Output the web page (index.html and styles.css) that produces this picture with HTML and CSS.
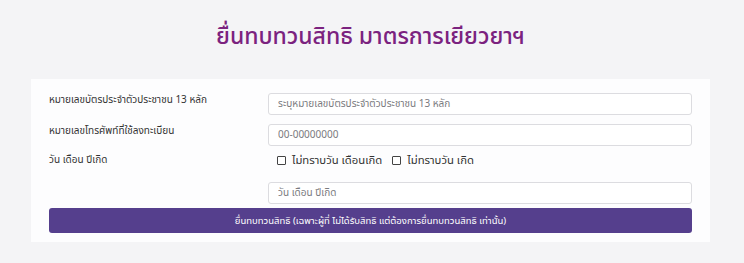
FILE: index.html
```html
<!DOCTYPE html>
<html lang="th">
<head>
<meta charset="utf-8">
<link rel="stylesheet" href="styles.css">
</head>
<body>
<div class="page">
  <h1 class="title">ยื่นทบทวนสิทธิ มาตรการเยียวยาฯ</h1>
  <div class="card">
    <div class="row">
      <label class="lbl">หมายเลขบัตรประจำตัวประชาชน 13 หลัก</label>
      <input class="inp" type="text" placeholder="ระบุหมายเลขบัตรประจำตัวประชาชน 13 หลัก">
    </div>
    <div class="row row-2">
      <label class="lbl">หมายเลขโทรศัพท์ที่ใช้ลงทะเบียน</label>
      <input class="inp" type="text" placeholder="00-00000000">
    </div>
    <div class="row row-3">
      <label class="lbl lbl-mid">วัน เดือน ปีเกิด</label>
      <div class="checks">
        <label class="chk"><span class="box"></span>ไม่ทราบวัน เดือนเกิด</label>
        <label class="chk"><span class="box"></span>ไม่ทราบวัน เกิด</label>
      </div>
    </div>
    <div class="row row-4">
      <span class="lbl"></span>
      <input class="inp" type="text" placeholder="วัน เดือน ปีเกิด">
    </div>
    <button class="btn" type="button">ยื่นทบทวนสิทธิ (เฉพาะผู้ที่ ไม่ได้รับสิทธิ แต่ต้องการยื่นทบทวนสิทธิ เท่านั้น)</button>
  </div>
</div>
</body>
</html>
```
FILE: styles.css
```css
html, body {
  margin: 0;
  padding: 0;
  background: #f4f4f6;
  font-family: "Noto Sans Thai", "Noto Sans", "DejaVu Sans", sans-serif;
  color: #333;
}
.page {
  padding: 0 34px 0 31px;
}
.title {
  margin: 0;
  height: 79px;
  line-height: 74px;
  text-align: center;
  font-size: 23px;
  font-weight: 500;
  color: #7b227f;
}
.card {
  background: #fdfdfe;
  padding: 14px 18px 9px 18px;
}
.row {
  display: flex;
  align-items: flex-start;
}
.row-2 { margin-top: 9px; }
.row-3 { margin-top: 4px; height: 20px; align-items: center; }
.row-4 { margin-top: 12px; }
.lbl {
  flex: 0 0 219px;
  font-size: 10px;
  color: #333;
  line-height: 14px;
}
.inp {
  box-sizing: border-box;
  flex: 1 1 auto;
  min-width: 0;
  height: 22px;
  border: 1px solid #dcdce0;
  border-radius: 3px;
  background: #fff;
  padding: 0 9px;
  font-family: inherit;
  font-size: 10px;
  color: #555;
  outline: none;
}
.inp::placeholder { color: #7a7a7e; }
.checks {
  display: flex;
  align-items: center;
  gap: 10px;
  padding-left: 9px;
}
.chk {
  display: flex;
  align-items: center;
  font-size: 11.3px;
  color: #333;
}
.box {
  width: 7px;
  height: 7px;
  border: 1px solid #444;
  border-radius: 1px;
  margin-right: 6px;
  background: #fff;
}
.btn {
  display: block;
  box-sizing: border-box;
  width: 100%;
  height: 25px;
  margin-top: 4px;
  border: none;
  border-radius: 3px;
  background: #553f8d;
  color: #fff;
  font-family: inherit;
  font-size: 9.5px;
}
```
